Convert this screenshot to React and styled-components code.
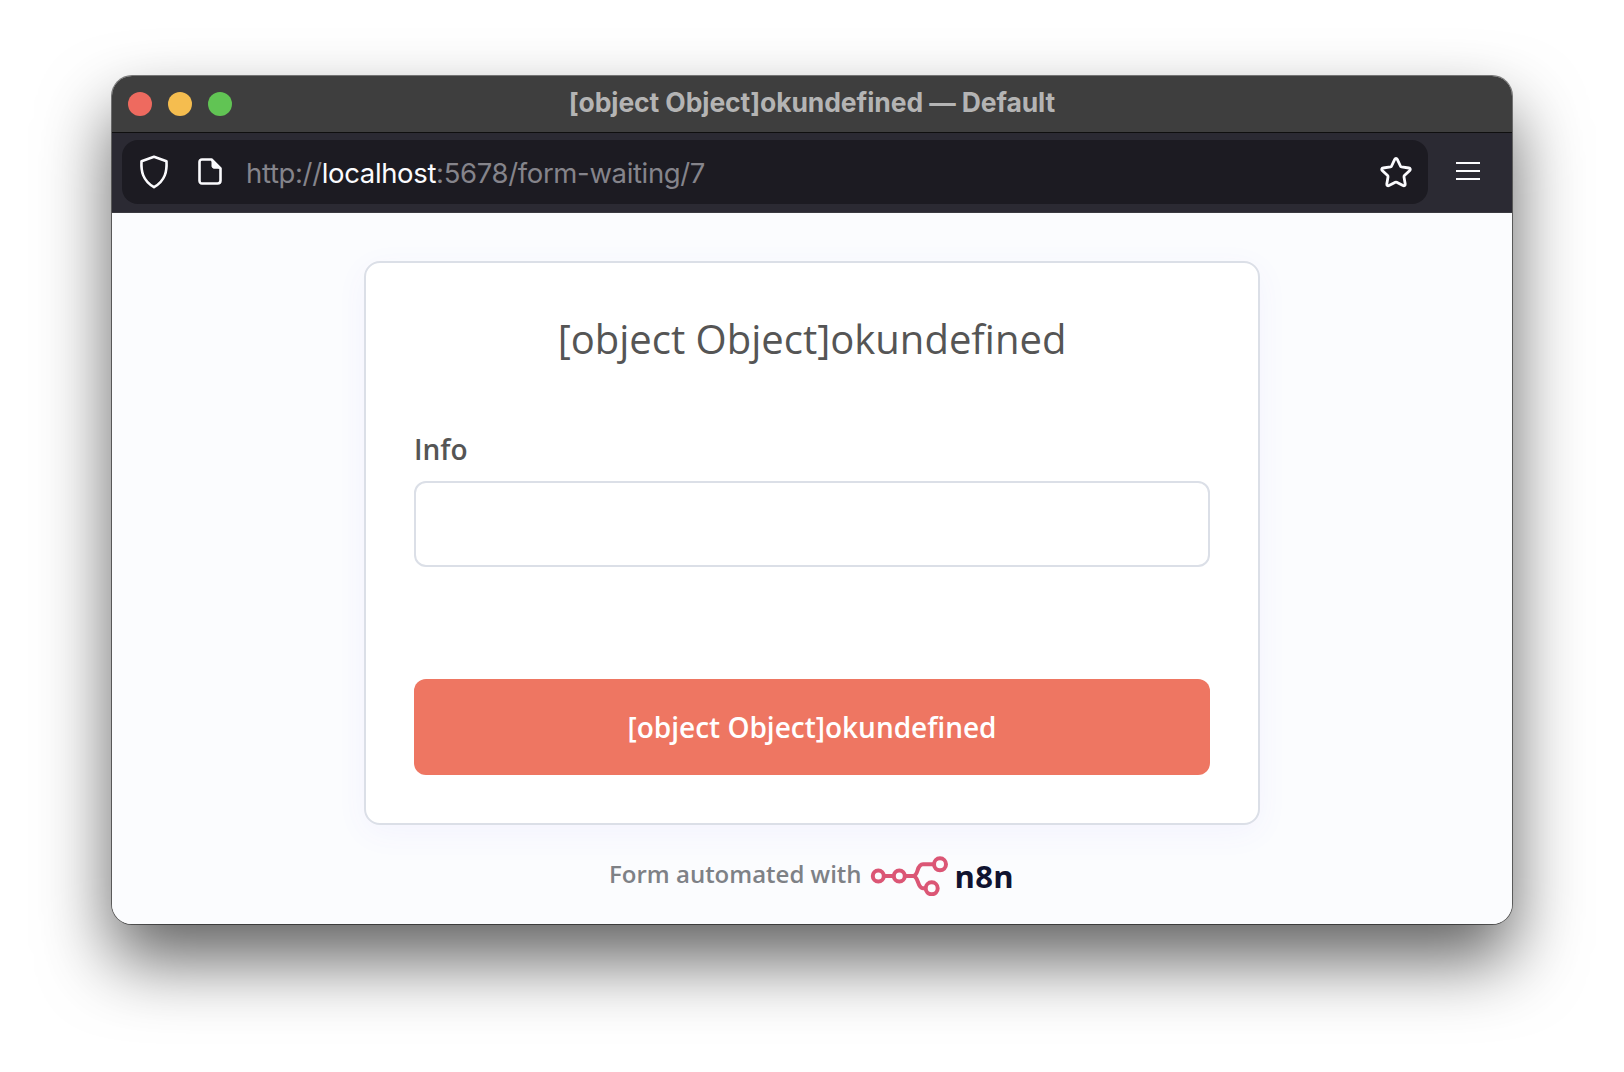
import React from 'react';
import styled, { createGlobalStyle } from 'styled-components';

const Global = createGlobalStyle`
    html, body { margin: 0; padding: 0; background: #fff; }
    * { box-sizing: border-box; }
`;

const Page = styled.div`
    width: 1624px;
    height: 1072px;
    padding: 76px 112px 0;
    background: #fff;
    overflow: hidden;
`;

const Ventana = styled.div`
    width: 1400px;
    height: 848px;
    border-radius: 20px;
    overflow: hidden;
    display: flex;
    flex-direction: column;
    box-shadow: 0 0 0 1px rgba(0,0,0,.5), 0 36px 70px rgba(0,0,0,.62);
`;

const BarraTitulo = styled.div`
    height: 57px;
    flex: none;
    background: #3e3e3e;
    border-bottom: 1px solid #0f0f0f;
    display: flex;
    align-items: center;
    position: relative;
    padding: 0 0 0 16px;
    gap: 16px;
`;

const Punto = styled.span`
    width: 24px;
    height: 24px;
    border-radius: 50%;
    background: ${props => props.color};
`;

const TituloVentana = styled.div`
    position: absolute;
    left: 0;
    right: 0;
    top: 8px;
    text-align: center;
    font: 700 26.5px/36px Inter, sans-serif;
    letter-spacing: -0.1px;
    color: #b4b4b4;
`;

const BarraHerramientas = styled.div`
    height: 80px;
    flex: none;
    background: #2b2a33;
    border-bottom: 1px solid #3a3a40;
    display: flex;
    align-items: center;
    padding: 0 32px 2px 10px;
`;

const BarraUrl = styled.div`
    flex: 1;
    height: 64px;
    background: #1c1b22;
    border-radius: 16px;
    display: flex;
    align-items: center;
    padding: 0 15px 0 17px;
`;

const IconoDoc = styled.svg`
    margin-left: 29px;
    flex: none;
`;

const Url = styled.div`
    margin-left: 24px;
    flex: 1;
    font: 400 27.5px/36px Inter, sans-serif;
    letter-spacing: -0.35px;
    color: #85848b;
    padding-top: 2px;
`;

const Host = styled.span`
    color: #fbfbfe;
`;

const Menu = styled.div`
    margin-left: 28px;
    width: 24px;
    display: flex;
    flex-direction: column;
    gap: 6px;
    margin-top: -2px;
`;

const LineaMenu = styled.span`
    height: 2px;
    background: #fbfbfe;
`;

const Contenido = styled.div`
    flex: 1;
    background: #fbfcfe;
    display: flex;
    flex-direction: column;
    align-items: center;
    padding-top: 48px;
`;

const Tarjeta = styled.div`
    width: 896px;
    height: 564px;
    background: #fff;
    border: 2px solid #dbdfe7;
    border-radius: 16px;
    box-shadow: 0 8px 32px rgba(99,77,255,.05);
    padding: 48px;
    display: flex;
    flex-direction: column;
`;

const Titulo = styled.h1`
    margin: 0;
    font: 400 40px/56px "Open Sans", sans-serif;
    color: #555;
    text-align: center;
`;

const Etiqueta = styled.label`
    margin-top: 62px;
    font: 600 28px/40px "Open Sans", sans-serif;
    color: #555;
`;

const Campo = styled.input`
    margin-top: 12px;
    width: 100%;
    height: 86px;
    flex: none;
    border: 2px solid #dbdfe7;
    border-radius: 12px;
    background: #fff;
`;

const Boton = styled.button`
    margin-top: 112px;
    width: 100%;
    height: 96px;
    flex: none;
    border: 0;
    border-radius: 12px;
    background: #ee7662;
    color: #fff;
    font: 600 28px/40px "Open Sans", sans-serif;
`;

const Pie = styled.div`
    margin-top: 31px;
    display: flex;
    align-items: center;
    margin-left: -1px;
`;

const TextoPie = styled.span`
    font: 600 24px/34px "Open Sans", sans-serif;
    color: #7e8186;
    margin-top: -5px;
`;

const Logo = styled.svg`
    margin-left: 8px;
    flex: none;
`;

const Marca = styled.span`
    margin-left: 7px;
    font: 700 31px/40px "Open Sans", sans-serif;
    letter-spacing: 0.3px;
    color: #101330;
`;

export default function App() {
    return (
        <Page>
            <Global />
            <Ventana>
                <BarraTitulo>
                    <Punto color="#ee6a5f" />
                    <Punto color="#f5bd4f" />
                    <Punto color="#61c454" />
                    <TituloVentana>[object Object]okundefined — Default</TituloVentana>
                </BarraTitulo>
                <BarraHerramientas>
                    <BarraUrl>
                        <svg width="30" height="34" viewBox="0 0 30 34" fill="none" stroke="#fbfbfe" strokeWidth="2.6" strokeLinejoin="round">
                            <path d="M15 1.8 L27.5 6.2 C28 16 26.5 25.5 15 32.2 C3.5 25.5 2 16 2.5 6.2 Z" />
                        </svg>
                        <IconoDoc width="24" height="27" viewBox="0 0 24 27" fill="none" stroke="#fbfbfe" strokeWidth="2.6" strokeLinejoin="round">
                            <path d="M4 1.5 H13.5 L22.5 10.5 V22.5 C22.5 24.5 21 25.5 19.5 25.5 H4 C2.5 25.5 1.5 24.5 1.5 22.5 V4 C1.5 2.5 2.5 1.5 4 1.5 Z" />
                            <path d="M14 2 L22 10.2 H16 C14.8 10.2 14 9.4 14 8.2 Z" fill="#fbfbfe" strokeWidth="1" />
                        </IconoDoc>
                        <Url>http://<Host>localhost</Host>:5678/form-waiting/7</Url>
                        <svg width="34" height="32" viewBox="0 0 34 32" fill="none" stroke="#fbfbfe" strokeWidth="2.8" strokeLinejoin="round">
                            <path d="M17 2.5 C17.6 2.5 18 2.8 18.3 3.4 L21.4 10 C21.6 10.5 22 10.8 22.5 10.9 L29.8 12 C31.3 12.2 31.8 13.5 30.8 14.5 L25.4 19.6 C25 20 24.9 20.4 25 20.9 L26.2 28 C26.4 29.4 25.2 30.2 24 29.5 L17.7 26.2 C17.2 26 16.8 26 16.3 26.2 L10 29.5 C8.8 30.2 7.6 29.4 7.8 28 L9 20.9 C9.1 20.4 9 20 8.6 19.6 L3.2 14.5 C2.2 13.5 2.7 12.2 4.2 12 L11.5 10.9 C12 10.8 12.4 10.5 12.6 10 L15.7 3.4 C16 2.8 16.4 2.5 17 2.5 Z" />
                        </svg>
                    </BarraUrl>
                    <Menu>
                        <LineaMenu />
                        <LineaMenu />
                        <LineaMenu />
                    </Menu>
                </BarraHerramientas>
                <Contenido>
                    <Tarjeta>
                        <Titulo>[object Object]okundefined</Titulo>
                        <Etiqueta>Info</Etiqueta>
                        <Campo />
                        <Boton>[object Object]okundefined</Boton>
                    </Tarjeta>
                    <Pie>
                        <TextoPie>Form automated with</TextoPie>
                        <Logo width="78" height="40" viewBox="0 0 78 40" fill="none" stroke="#db5675" strokeWidth="4">
                            <circle cx="8.3" cy="20" r="5.5" />
                            <circle cx="29.3" cy="20" r="5.5" />
                            <circle cx="70" cy="8.3" r="6" />
                            <circle cx="61.7" cy="32.3" r="6" />
                            <path d="M14 20 H23.5 M35 20 H43 C49 20 46 8.3 53 8.3 H64 M43 20 C49 20 47 32.3 53 32.3 H55.5" />
                        </Logo>
                        <Marca>n8n</Marca>
                    </Pie>
                </Contenido>
            </Ventana>
        </Page>
    );
}
